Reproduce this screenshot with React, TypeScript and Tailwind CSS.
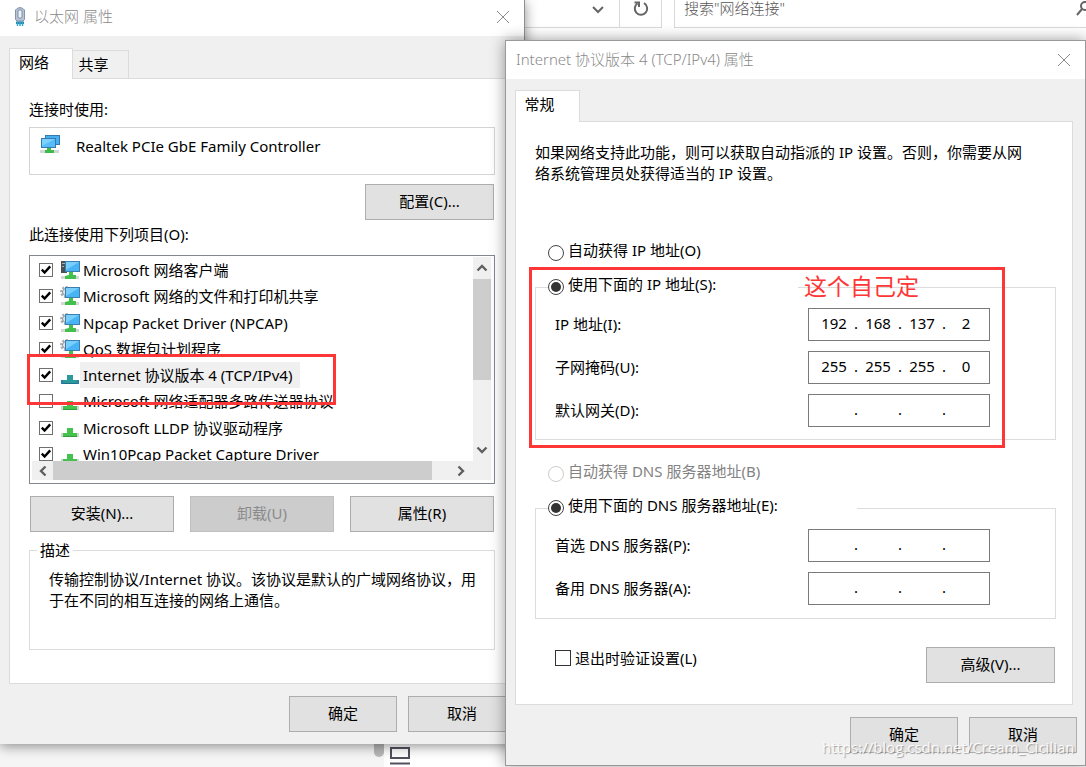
import { useState, type ReactNode } from "react";
import clsx from "clsx";

type ItemIcon = "client" | "service" | "protocol";
type NetItem = { id: string; label: string; icon: ItemIcon; enabled: boolean };

const ITEMS: NetItem[] = [
  { id: "client", label: "Microsoft 网络客户端", icon: "client", enabled: true },
  { id: "share", label: "Microsoft 网络的文件和打印机共享", icon: "service", enabled: true },
  { id: "npcap", label: "Npcap Packet Driver (NPCAP)", icon: "service", enabled: true },
  { id: "qos", label: "QoS 数据包计划程序", icon: "service", enabled: true },
  { id: "ipv4", label: "Internet 协议版本 4 (TCP/IPv4)", icon: "protocol", enabled: true },
  { id: "mux", label: "Microsoft 网络适配器多路传送器协议", icon: "protocol", enabled: false },
  { id: "lldp", label: "Microsoft LLDP 协议驱动程序", icon: "protocol", enabled: true },
  { id: "win10pcap", label: "Win10Pcap Packet Capture Driver", icon: "protocol", enabled: true },
];

// ---- icons ----

function PlugIcon() {
  return (
    <svg width="12" height="20" viewBox="0 0 12 20" aria-hidden="true">
      <path d="M3 1.5Q6 -0.5 9 1.5L10.5 3V12.5L9 14H3L1.5 12.5V3Z" fill="#b4c3d6" stroke="#8495ab" />
      <rect x="4" y="3" width="4" height="8" rx="1" fill="#edf2f8" stroke="#7d8ea4" />
      <path d="M2 14.500h8v2.500H2z" fill="#2b7fa5" />
      <path d="M3.5 15v4M6 15v4M8.5 15v4" stroke="#31a6cf" strokeWidth="1.5" />
    </svg>
  );
}

function AdapterIcon() {
  return (
    <svg width="20" height="20" viewBox="0 0 20 20" aria-hidden="true">
      <rect x="5.5" y="1.5" width="14" height="9" fill="#43b0f2" stroke="#3779ac" />
      <rect x="1.5" y="4.5" width="14" height="9" fill="#56bdfa" stroke="#3779ac" />
      <path d="M2 5h13L2 12z" fill="#7bd0fd" />
      <path d="M0 16h19v3H0z" fill="#d3d6d8" />
      <path d="M7 14h4v2h3v3H5v-3h2z" fill="#3dbb49" />
    </svg>
  );
}

function NetItemIcon({ kind, selected }: { kind: ItemIcon; selected: boolean }) {
  if (kind === "protocol") {
    return (
      <svg width="20" height="20" viewBox="0 0 20 20" aria-hidden="true">
        <path d="M1 15h18v4H1z" fill={selected ? "#2f7fa8" : "#cfd8d0"} />
        <path d="M7 10h6v5h4v4H3v-4h4z" fill={selected ? "#2a9a9b" : "#45c14d"} />
        <path d="M3 18h14v1H3z" fill={selected ? "#1f6f8f" : "#309f3b"} />
      </svg>
    );
  }
  return (
    <svg width="20" height="20" viewBox="0 0 20 20" aria-hidden="true">
      {kind === "client" ? (
        <>
          <rect x="1" y="1" width="6" height="12" fill="#4a5054" />
          <path d="M2 3.5h3M2 6.5h2" stroke="#a9b1b6" />
        </>
      ) : (
        <>
          <circle cx="6" cy="6" r="4.5" fill="none" stroke="#a5adb3" strokeWidth="3" strokeDasharray="2 1.4" />
          <circle cx="6" cy="6" r="3.5" fill="#dfe3e6" stroke="#8d959b" />
        </>
      )}
      <rect x="5.5" y="1.5" width="14" height="10" fill="#48b4f5" stroke="#3a7fae" />
      <path d="M6 2h13L6 10z" fill="#78cffd" />
      <path d="M1 16h18v3H1z" fill="#d3d7d9" />
      <path d="M9 12h4v3h3v4H5v-3l4-1z" fill="#43bf4c" />
    </svg>
  );
}

function CloseIcon() {
  return (
    <svg width="14" height="14" viewBox="0 0 14 14" fill="none" stroke="#8a8a8a" aria-hidden="true">
      <path d="M1 1l12 12M13 1L1 13" />
    </svg>
  );
}

function Arrow({ d }: { d: string }) {
  return (
    <svg width="12" height="12" viewBox="0 0 12 12" fill="none" stroke="#606060" strokeWidth="2.4" aria-hidden="true">
      <path d={d} />
    </svg>
  );
}

// ---- dialog parts ----

function TitleBar({ title, icon, className }: { title: string; icon?: ReactNode; className: string }) {
  return (
    <header className={clsx("flex items-center bg-white text-[#8a8a8a]", className)}>
      {icon}
      <h2 className="flex-1 pb-0.5 font-light">{title}</h2>
      <button type="button" aria-label="关闭"><CloseIcon /></button>
    </header>
  );
}

function PushButton({ children, className, disabled }: { children: ReactNode; className: string; disabled?: boolean }) {
  return (
    <button
      type="button"
      disabled={disabled}
      className={clsx(
        "h-9 border pb-0.5",
        disabled ? "border-[#c0c0c0] bg-[#cccccc] text-[#8b8b8b]" : "border-[#adadad] bg-[#e1e1e1] text-black",
        className,
      )}
    >
      {children}
    </button>
  );
}

function CheckBox({ id, checked, onChange, large }: { id: string; checked: boolean; onChange: () => void; large?: boolean }) {
  return (
    <span className="grid shrink-0 place-items-center">
      <input
        id={id}
        type="checkbox"
        checked={checked}
        onChange={onChange}
        className={clsx("appearance-none border bg-white [grid-area:1/1]", large ? "size-4 border-[#333333]" : "size-[14px] border-[#707070]")}
      />
      {checked && (
        <svg width="12" height="12" viewBox="0 0 12 12" className="pointer-events-none [grid-area:1/1]" fill="none" stroke="#000" strokeWidth="2.4" aria-hidden="true">
          <path d="M1.8 5.6L4.6 8.6L10.2 2.4" />
        </svg>
      )}
    </span>
  );
}

type RadioProps = { name: string; label: string; checked?: boolean; disabled?: boolean };

function Radio({ name, label, checked, disabled }: RadioProps) {
  return (
    <label className={clsx("flex h-6 items-center gap-1", disabled && "text-[#838383]")}>
      <input
        type="radio"
        name={name}
        defaultChecked={checked}
        disabled={disabled}
        className="grid size-4 appearance-none place-items-center rounded-full border border-[#444444] bg-white before:size-2.5 before:rounded-full checked:before:bg-[#333333] disabled:border-[#cccccc]"
      />
      <span className="pb-1.5">{label}</span>
    </label>
  );
}

function IpField({ label, parts }: { label: string; parts: string[] }) {
  return (
    <div role="group" aria-label={label} className="flex items-center justify-between">
      <span className="pb-0.5">{label}</span>
      <div className="flex h-[33px] w-[182px] items-center border border-[#7a7a7a] bg-white pb-1 pl-[11px]">
        {parts.map((part, i) => (
          <div key={i} className="flex items-center">
            {i > 0 && <span className="w-4 text-center">.</span>}
            <input aria-label={`${label} ${i + 1}`} defaultValue={part} maxLength={3} className="w-7 text-center outline-none" />
          </div>
        ))}
      </div>
    </div>
  );
}

const EMPTY = ["", "", "", ""];

// ---- windows ----

function ItemList() {
  const [items, setItems] = useState(ITEMS);
  const [selected, setSelected] = useState("ipv4");

  const toggle = (id: string) =>
    setItems(list => list.map(it => (it.id === id ? { ...it, enabled: !it.enabled } : it)));

  return (
    <div className="mt-2.5 border border-[#828790] bg-white pt-px pr-[3px] pb-[3px]">
      <div className="flex h-[204px]">
        <ul className="grid h-[210px] flex-1 grid-rows-8 self-start [clip-path:inset(0_0_6px_0)]">
          {items.map(it => (
            <li key={it.id} className="flex items-center pl-[9px]" onClick={() => setSelected(it.id)}>
              <CheckBox id={it.id} checked={it.enabled} onChange={() => toggle(it.id)} />
              <span className="ml-[7px]"><NetItemIcon kind={it.icon} selected={it.id === selected} /></span>
              <label htmlFor={it.id} className={clsx("flex h-full items-center pr-2 pl-[3px]", it.id === selected && "bg-[#f0f0f0]")}>
                {it.label}
              </label>
            </li>
          ))}
        </ul>
        <div className="flex w-[18px] flex-col items-center bg-[#f0f0f0]">
          <button type="button" aria-label="向上滚动" className="grid h-[22px] place-items-center"><Arrow d="M1.5 8.5L6 4l4.500 4.500" /></button>
          <div className="h-[101px] w-full bg-[#cdcdcd]" />
          <button type="button" aria-label="向下滚动" className="mt-auto grid h-[22px] place-items-center"><Arrow d="M1.500 3.500L6 8l4.500-4.500" /></button>
        </div>
      </div>
      <div className="ml-0.5 flex h-[19px] items-center bg-[#f0f0f0]">
        <button type="button" aria-label="向左滚动" className="grid w-[21px] place-items-center"><Arrow d="M8.500 1.500L4 6l4.500 4.500" /></button>
        <div className="h-full w-[379px] bg-[#cdcdcd]" />
        <button type="button" aria-label="向右滚动" className="ml-auto mr-[18px] grid w-6 place-items-center"><Arrow d="M3.500 1.500L8 6l-4.500 4.500" /></button>
      </div>
    </div>
  );
}

function AdapterWindow() {
  return (
    <section aria-label="以太网 属性" className="absolute top-0 left-0 w-[525px] border-r border-[#8f8f8f] bg-[#f0f0f0] shadow-[0_2px_12px_rgba(0,0,0,0.45)]">
      <TitleBar title="以太网 属性" icon={<span className="mr-2"><PlugIcon /></span>} className="h-9 pr-3.5 pb-0.5 pl-3.5" />
      <div className="pt-3 pr-2 pb-3 pl-[9px]">
        <div role="tablist" className="flex h-[30px] items-end">
          <button role="tab" aria-selected="true" type="button" className="z-10 -mb-px h-[31px] w-16 border-x border-t border-[#dcdcdc] bg-white pr-3.5 pb-1">网络</button>
          <button role="tab" aria-selected="false" type="button" className="h-7 w-14 border-t border-r border-[#dcdcdc] pr-3.5 pb-0.5">共享</button>
        </div>
        <div className="border border-[#dcdcdc] bg-white pt-5 pr-5 pb-[33px] pl-[19px]">
          <p className="h-5">连接时使用:</p>
          <div className="mt-2 flex h-12 items-start gap-4 border border-[#d4d4d4] pt-1.5 pl-2.5">
            <AdapterIcon />
            <span className="pt-0.5">Realtek PCIe GbE Family Controller</span>
          </div>
          <div className="mt-[9px] flex justify-end pr-px">
            <PushButton className="w-[129px]">配置(C)...</PushButton>
          </div>
          <p className="mt-1 h-[21px]">此连接使用下列项目(O):</p>
          <ItemList />
          <div className="mt-3 grid grid-cols-3 gap-4 px-px">
            <PushButton className="w-full">安装(N)...</PushButton>
            <PushButton className="w-full" disabled>卸载(U)</PushButton>
            <PushButton className="w-full">属性(R)</PushButton>
          </div>
          <fieldset className="mt-2 border border-[#dcdcdc] pr-3 pb-[38px] pl-[19px]">
            <legend className="-ml-3 h-5 px-[3px]">描述</legend>
            <p className="pt-[9px] leading-[21px]">
              传输控制协议/Internet 协议。该协议是默认的广域网络协议，用于在不同的相互连接的网络上通信。
            </p>
          </fieldset>
        </div>
        <div className="mt-3 flex justify-end gap-[11px]">
          <PushButton className="w-[108px]">确定</PushButton>
          <PushButton className="w-[108px]">取消</PushButton>
        </div>
      </div>
    </section>
  );
}

function Ipv4Window() {
  const [validate, setValidate] = useState(false);

  return (
    <section aria-label="Internet 协议版本 4 (TCP/IPv4) 属性" className="absolute top-10 left-[505px] w-[581px] border border-[#999999] bg-[#f0f0f0] shadow-[0_0_14px_rgba(0,0,0,0.4)]">
      <TitleBar title="Internet 协议版本 4 (TCP/IPv4) 属性" className="h-[38px] pr-3.5 pl-2.5" />
      <div className="pt-[11px] pr-3 pl-[9px]">
        <div role="tablist" className="flex h-[31px]">
          <button role="tab" aria-selected="true" type="button" className="z-10 h-8 w-[65px] border-x border-t border-[#dcdcdc] bg-white pr-4 pb-1.5">常规</button>
        </div>
        <div className="border border-[#dcdcdc] bg-white pt-5 pr-4 pb-[21px] pl-[19px]">
          <p className="pr-7 leading-[21px]">
            如果网络支持此功能，则可以获取自动指派的 IP 设置。否则，你需要从网络系统管理员处获得适当的 IP 设置。
          </p>
          <div className="mt-[57px] ml-[13px]">
            <Radio name="ip" label="自动获得 IP 地址(O)" />
          </div>
          <fieldset className="mt-2.5 border border-[#dcdcdc] pr-[65px] pb-3 pl-[19px]">
            <legend className="-ml-[7px] w-[250px]"><Radio name="ip" label="使用下面的 IP 地址(S):" checked /></legend>
            <div className="flex flex-col gap-2.5 pt-[9px]">
              <IpField label="IP 地址(I):" parts={["192", "168", "137", "2"]} />
              <IpField label="子网掩码(U):" parts={["255", "255", "255", "0"]} />
              <IpField label="默认网关(D):" parts={EMPTY} />
            </div>
          </fieldset>
          <div className="mt-[22px] ml-[13px]">
            <Radio name="dns" label="自动获得 DNS 服务器地址(B)" disabled />
          </div>
          <fieldset className="mt-2.5 border border-[#dcdcdc] pr-[65px] pb-[13px] pl-[19px]">
            <legend className="-ml-[7px] w-[309px]"><Radio name="dns" label="使用下面的 DNS 服务器地址(E):" checked /></legend>
            <div className="flex flex-col gap-2.5 pt-[9px]">
              <IpField label="首选 DNS 服务器(P):" parts={EMPTY} />
              <IpField label="备用 DNS 服务器(A):" parts={EMPTY} />
            </div>
          </fieldset>
          <div className="mt-7 flex items-start justify-between pr-px pl-5">
            <div className="flex items-center gap-1 pt-px">
              <CheckBox id="validate" large checked={validate} onChange={() => setValidate(v => !v)} />
              <label htmlFor="validate">退出时验证设置(L)</label>
            </div>
            <PushButton className="w-[129px]">高级(V)...</PushButton>
          </div>
        </div>
      </div>
      <div className="flex justify-end gap-[11px] pt-3 pr-2 pb-3">
        <PushButton className="w-[108px]">确定</PushButton>
        <PushButton className="w-[108px]">取消</PushButton>
      </div>
    </section>
  );
}

// The Explorer window that sits behind both dialogs: only its address bar and
// status strip stay visible.
function ExplorerBackdrop() {
  return (
    <div className="flex h-full flex-col justify-between bg-white text-[#6b6b6b]">
      <div className="flex h-7 pl-[500px]">
        <div className="flex w-[120px] items-start justify-end border-r border-b border-[#d9d9d9] pt-1 pr-3.5">
          <svg width="14" height="12" viewBox="0 0 14 12" fill="none" stroke="#666" strokeWidth="2" aria-hidden="true"><path d="M2 3l5 5 5-5" /></svg>
        </div>
        <button type="button" aria-label="刷新" className="flex w-[42px] justify-center border-r border-b border-[#d9d9d9]">
          <svg width="18" height="18" viewBox="0 0 18 18" fill="none" stroke="#666" strokeWidth="2" aria-hidden="true">
            <path d="M12 3.200A6.200 6.200 0 1 1 5.500 3.500" />
            <path d="M2.500 2.500H7V7" />
          </svg>
        </button>
        <div className="ml-3 flex flex-1 items-start border-b border-l border-[#d9d9d9]">
          <input aria-label="搜索" placeholder={'搜索"网络连接"'} className="h-4 flex-1 pl-[9px] font-light outline-none placeholder:text-[#555555]" />
          <svg width="11" height="18" viewBox="0 0 11 18" fill="none" stroke="#666" strokeWidth="2" aria-hidden="true">
            <circle cx="10" cy="6" r="4" />
            <path d="M7 9l-5 6" />
          </svg>
        </div>
      </div>
      <div className="flex h-7">
        <div className="flex w-96 justify-end bg-[#f5f5f5]">
          <div className="h-[18px] w-2.5 rounded-b-full bg-[#b9b9b9]" />
        </div>
        <svg width="32" height="28" viewBox="0 0 32 28" fill="none" stroke="#52525f" strokeWidth="2" aria-hidden="true">
          <rect x="7" y="9" width="18" height="10" />
          <path d="M6 24.500h20" />
        </svg>
      </div>
    </div>
  );
}

export default function App() {
  return (
    <main className="relative h-screen overflow-hidden font-['Noto_Sans','Noto_Sans_CJK_SC',sans-serif] text-[15px] leading-5 text-black">
      <ExplorerBackdrop />
      <AdapterWindow />
      <Ipv4Window />

      {/* hand-drawn marks over the dialogs */}
      <div className="pointer-events-none absolute top-[354px] left-[27px] h-[51px] w-[309px] border-3 border-[#ff3636]" />
      <div className="pointer-events-none absolute top-[267px] left-[529px] h-[181px] w-[476px] border-3 border-[#ff3636]" />
      <p className="pointer-events-none absolute top-[272px] left-[804px] text-[23px] leading-7 text-[#ff3636]">这个自己定</p>
      <p className="pointer-events-none absolute top-[737px] left-[822px] font-['Open_Sans',sans-serif] text-white/90 [text-shadow:1px_1px_1px_rgba(0,0,0,0.35)]">
        https://blog.csdn.net/Cream_Cicilian
      </p>
    </main>
  );
}
